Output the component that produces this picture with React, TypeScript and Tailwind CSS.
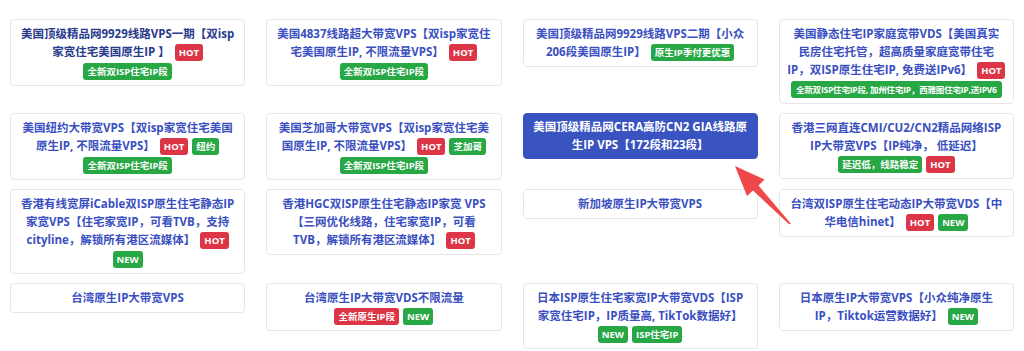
import React from "react";

type Badge = { text: string; color: "red" | "green"; small?: boolean };
type Seg = string | Badge;
type Line = Seg | Seg[];

interface Plan {
  lines: Line[];
  dark?: boolean;
  active?: boolean;
}

const HOT: Badge = { text: "HOT", color: "red" };
const NEW: Badge = { text: "NEW", color: "green" };
const ISP_SEG: Badge = { text: "全新双ISP住宅IP段", color: "green" };

const plans: Plan[] = [
  // row 1
  {
    dark: true,
    lines: ["美国顶级精品网9929线路VPS一期【双isp", ["家宽住宅美国原生IP 】", HOT], [ISP_SEG]],
  },
  {
    lines: ["美国4837线路超大带宽VPS【双isp家宽住", ["宅美国原生IP, 不限流量VPS】", HOT], [ISP_SEG]],
  },
  {
    lines: ["美国顶级精品网9929线路VPS二期【小众", ["206段美国原生IP】", { text: "原生IP季付更优惠", color: "green" }]],
  },
  {
    lines: [
      "美国静态住宅IP家庭宽带VDS【美国真实",
      "民房住宅托管，超高质量家庭宽带住宅",
      ["IP，双ISP原生住宅IP, 免费送IPv6】", HOT],
      [{ text: "全新双ISP住宅IP段, 加州住宅IP，西雅图住宅IP,送IPV6", color: "green", small: true }],
    ],
  },
  // row 2
  {
    lines: [
      "美国纽约大带宽VPS【双isp家宽住宅美国",
      ["原生IP, 不限流量VPS】", HOT, { text: "纽约", color: "green" }],
      [ISP_SEG],
    ],
  },
  {
    lines: [
      "美国芝加哥大带宽VPS【双isp家宽住宅美",
      ["国原生IP, 不限流量VPS】", HOT, { text: "芝加哥", color: "green" }],
      [ISP_SEG],
    ],
  },
  {
    active: true,
    lines: ["美国顶级精品网CERA高防CN2 GIA线路原", "生IP VPS【172段和23段】"],
  },
  {
    lines: [
      "香港三网直连CMI/CU2/CN2精品网络ISP",
      "IP大带宽VPS【IP纯净， 低延迟】",
      [{ text: "延迟低，线路稳定", color: "green" }, HOT],
    ],
  },
  // row 3
  {
    lines: [
      "香港有线宽屏iCable双ISP原生住宅静态IP",
      "家宽VPS【住宅家宽IP，可看TVB，支持",
      ["cityline，解锁所有港区流媒体】", HOT],
      [NEW],
    ],
  },
  {
    lines: ["香港HGC双ISP原生住宅静态IP家宽 VPS", "【三网优化线路，住宅家宽IP，可看", ["TVB，解锁所有港区流媒体】", HOT]],
  },
  { lines: ["新加坡原生IP大带宽VPS"] },
  {
    lines: ["台湾双ISP原生住宅动态IP大带宽VDS【中", ["华电信hinet】", HOT, NEW]],
  },
  // row 4
  { lines: ["台湾原生IP大带宽VPS"] },
  {
    lines: ["台湾原生IP大带宽VDS不限流量", [{ text: "全新原生IP段", color: "red" }, NEW]],
  },
  {
    lines: [
      "日本ISP原生住宅家宽IP大带宽VDS【ISP",
      "家宽住宅IP，IP质量高, TikTok数据好】",
      [NEW, { text: "ISP住宅IP", color: "green" }],
    ],
  },
  {
    lines: ["日本原生IP大带宽VPS【小众纯净原生", ["IP，Tiktok运营数据好】", NEW]],
  },
];

function Tag({ b, first }: { b: Badge; first: boolean }) {
  return (
    <span
      className={`inline-block align-middle whitespace-nowrap rounded-[3px] text-white font-bold h-[17px] leading-[17px] ${
        b.small ? "text-[8.5px] px-[5px] tracking-[-0.2px]" : "text-[9.5px] px-[4px]"
      } ${b.color === "red" ? "bg-[#dc3545]" : "bg-[#28a745]"} ${first ? "" : "ml-[4px]"}`}
    >
      {b.text}
    </span>
  );
}

function PlanCard({ plan }: { plan: Plan }) {
  const base = plan.active
    ? "bg-[#3953c0] border-[#3953c0] text-white py-[4px]"
    : `bg-white border-[#e4e6ea] py-[5px] ${plan.dark ? "text-[#283a8c]" : "text-[#3a4fc1]"}`;
  return (
    <div className={`rounded-[4px] border px-[6px] text-center font-bold text-[11.5px] leading-[18px] ${base}`}>
      {plan.lines.map((line, i) => {
        const segs = Array.isArray(line) ? line : [line];
        return (
          <div key={i} className="whitespace-nowrap">
            {segs.map((s, j) =>
              typeof s === "string" ? (
                <span key={j} className={segs.length > 1 ? "mr-[1px]" : ""}>
                  {s}
                </span>
              ) : (
                <Tag key={j} b={s} first={j === 0} />
              )
            )}
          </div>
        );
      })}
    </div>
  );
}

export default function App() {
  return (
    <div
      className="relative w-[1024px] h-[351px] bg-white overflow-hidden"
      style={{ fontFamily: '"Open Sans", "Noto Sans CJK SC", sans-serif' }}
    >
      <div className="grid grid-cols-4 gap-x-[21px] gap-y-[9px] items-start px-[10px] pt-[19px]">
        {plans.map((p, i) => (
          <PlanCard key={i} plan={p} />
        ))}
      </div>

      {/* red pointer arrow */}
      <svg className="absolute left-0 top-0 pointer-events-none" width="1024" height="351">
        <polygon
          points="735,166 764.5,179.5 758.5,185.5 790.8,223.6 789.4,224.6 753,190.5 747,196"
          fill="#f0484a"
        />
      </svg>
    </div>
  );
}
